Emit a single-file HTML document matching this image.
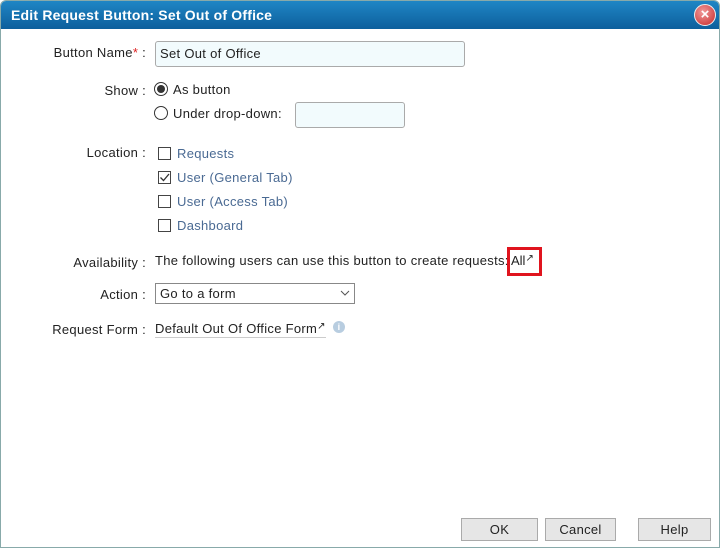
<!DOCTYPE html>
<html><head><style>
body{margin:0;width:720px;height:548px;overflow:hidden;font-family:"Liberation Sans",sans-serif;font-size:13px;color:#222;background:#fff;position:relative;letter-spacing:0.3px}
.win{position:absolute;left:0;top:0;width:718px;height:546px;border:1px solid #8aa;border-radius:6px 6px 0 0;overflow:hidden}
.title{height:28px;background:linear-gradient(#1f86c5,#0d5f9c);color:#fff;font-weight:bold;font-size:14px;line-height:28px;padding-left:10px;letter-spacing:0.2px}
.close{position:absolute;right:3px;top:3px;width:20px;height:20px;border-radius:50%;background:radial-gradient(circle at 40% 35%,#f19a9a,#c62828);border:1px solid #eee;color:#fff;font-weight:bold;text-align:center;line-height:20px;font-size:15px;letter-spacing:0}
.a{position:absolute;white-space:nowrap}
.lbl{position:absolute;right:574px;text-align:right;white-space:nowrap}
.inp{position:absolute;border:1px solid #aaa;border-radius:3px;background:#f2fbfd}
.cb{position:absolute;width:11px;height:11px;border:1px solid #444;background:#fff}
.lnk{color:#4a6a93}
.btn{position:absolute;top:518px;height:21px;background:#e6e6e6;border:1px solid #aaa;text-align:center;line-height:21px}
</style></head><body>
<div class="win">
<div class="title">Edit Request Button: Set Out of Office</div>
<div class="close">×</div>
</div>
<div class="lbl" style="top:45px">Button Name<span style="color:#d22">*</span> :</div>
<div class="inp" style="left:155px;top:41px;width:308px;height:24px"></div>
<div class="a" style="left:160px;top:46px">Set Out of Office</div>
<div class="lbl" style="top:83px">Show :</div>
<div class="a" style="left:154px;top:82px;width:12px;height:12px;border:1px solid #333;border-radius:50%"><div style="width:8px;height:8px;margin:2px;border-radius:50%;background:#333"></div></div>
<div class="a" style="left:173px;top:82px">As button</div>
<div class="a" style="left:154px;top:106px;width:12px;height:12px;border:1px solid #333;border-radius:50%"></div>
<div class="a" style="left:173px;top:106px">Under drop-down:</div>
<div class="inp" style="left:295px;top:102px;width:108px;height:24px"></div>
<div class="lbl" style="top:145px">Location :</div>
<div class="cb" style="left:158px;top:147px"></div><div class="a lnk" style="left:177px;top:146px">Requests</div>
<div class="cb" style="left:158px;top:171px"><svg width="11" height="11" style="position:absolute;left:0;top:0"><path d="M1.5 5.5L4.5 8.5L10 2" stroke="#333" stroke-width="1.3" fill="none"/></svg></div><div class="a lnk" style="left:177px;top:170px">User (General Tab)</div>
<div class="cb" style="left:158px;top:195px"></div><div class="a lnk" style="left:177px;top:194px">User (Access Tab)</div>
<div class="cb" style="left:158px;top:219px"></div><div class="a lnk" style="left:177px;top:218px">Dashboard</div>
<div class="lbl" style="top:255px">Availability :</div>
<div class="a" style="left:155px;top:253px">The following users can use this button to create requests:</div>
<div class="a" style="left:511px;top:253px;letter-spacing:0">All<span style="font-size:10px;vertical-align:4px">↗</span></div>
<div class="a" style="left:507px;top:247px;width:29px;height:23px;border:3px solid #e0141e"></div>
<div class="lbl" style="top:287px">Action :</div>
<div class="a" style="left:155px;top:283px;width:198px;height:19px;border:1px solid #888;background:#fff"></div>
<div class="a" style="left:160px;top:286px">Go to a form</div>
<svg class="a" style="left:340px;top:290px" width="10" height="6"><path d="M1 1L5 5L9 1" stroke="#555" fill="none"/></svg>
<div class="lbl" style="top:322px">Request Form :</div>
<div class="a" style="left:155px;top:321px;border-bottom:1px solid #ccc;padding-bottom:1px">Default Out Of Office Form<span style="font-size:10px;vertical-align:4px">↗</span></div>
<div class="a" style="left:333px;top:321px;width:12px;height:12px;border-radius:50%;background:#b8cde0;color:#fff;font-size:9px;text-align:center;line-height:12px;font-weight:bold">i</div>
<div class="btn" style="left:461px;width:75px">OK</div>
<div class="btn" style="left:545px;width:69px">Cancel</div>
<div class="btn" style="left:638px;width:71px">Help</div>
</body></html>
